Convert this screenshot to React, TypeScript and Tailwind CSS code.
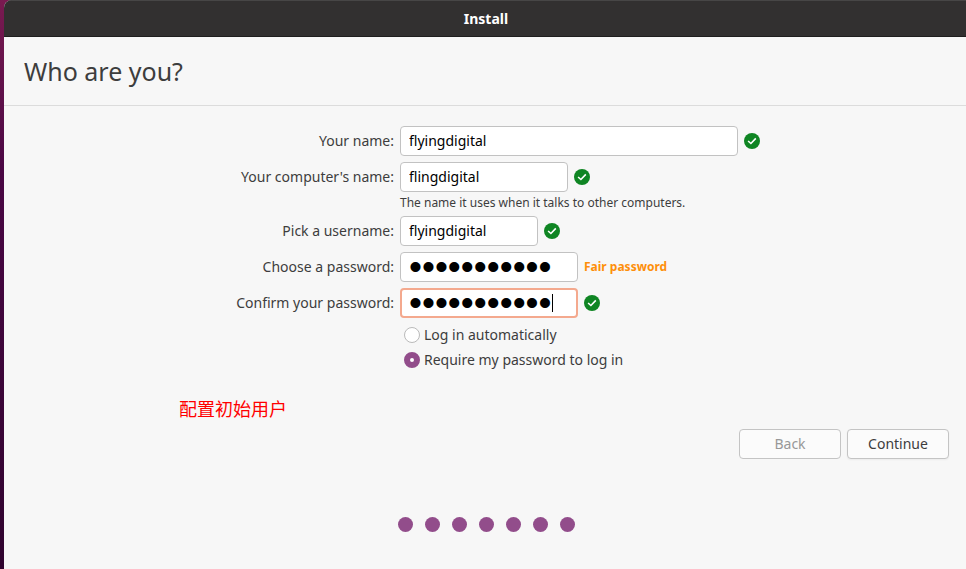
import { ReactNode } from "react";

const entry =
  "h-[30px] rounded border border-[#c2c2c2] bg-white px-2 pb-0.5 text-sm text-black outline-none";
const passwordEntry =
  "h-[30px] w-[178px] rounded bg-white font-['Liberation_Sans',sans-serif] text-[37px] text-black outline-none";
const button = "h-[30px] w-[102px] rounded border border-[#c4c4c4] bg-[#fbfbfb] text-sm";

function Check() {
  return (
    <svg viewBox="0 0 16 16" className="size-4 shrink-0" role="img" aria-label="OK">
      <circle cx="8" cy="8" r="8" fill="#0f8523" />
      <path d="M4.1 8 6.9 10.5 11.8 5.4" fill="none" stroke="#fff" strokeWidth="1.6" />
    </svg>
  );
}

function Row({ id, label, children, hint }: { id: string; label: string; children: ReactNode; hint?: string }) {
  return (
    <div className="grid grid-cols-[390fr_566fr] gap-x-1.5">
      <label htmlFor={id} className="text-right text-sm leading-[30px]">
        {label}
      </label>
      <div>
        <div className="flex items-center gap-1.5">{children}</div>
        {hint && <p className="pt-1 text-xs leading-[14px]">{hint}</p>}
      </div>
    </div>
  );
}

function Choice({ id, label, checked }: { id: string; label: string; checked?: boolean }) {
  return (
    <div className="flex h-[25px] items-center gap-1">
      <input
        id={id}
        type="radio"
        name="login"
        defaultChecked={checked}
        className="size-4 appearance-none rounded-full border border-[#bababa] bg-white checked:border-[6px] checked:border-[#924d8b]"
      />
      <label htmlFor={id} className="text-sm">
        {label}
      </label>
    </div>
  );
}

export default function App() {
  return (
    <div className="min-h-screen bg-linear-to-b from-[#7a1a50] via-[#4a0744] via-30% to-[#30042f] pl-1 font-['Noto_Sans','Noto_Sans_CJK_SC',sans-serif] text-[#3d3d3d]">
      <main className="min-h-screen overflow-hidden rounded-tl-lg bg-[#f7f7f7]">
        <header className="flex h-[37px] items-center justify-center border-t border-b border-t-[#474646] border-b-[#1f1e1e] bg-[#323030] pl-0.5 text-sm font-bold text-white">
          Install
        </header>
        <h1 className="border-b border-[#dcdcdc] px-5 py-4 text-[25px] leading-9">Who are you?</h1>

        <form className="pt-5">
          <div className="flex flex-col gap-1.5">
            <Row id="name" label="Your name:">
              <input id="name" defaultValue="flyingdigital" className={`${entry} w-[338px]`} />
              <Check />
            </Row>
            <Row id="host" label="Your computer's name:" hint="The name it uses when it talks to other computers.">
              <input id="host" defaultValue="flingdigital" className={`${entry} w-[168px]`} />
              <Check />
            </Row>
            <Row id="user" label="Pick a username:">
              <input id="user" defaultValue="flyingdigital" className={`${entry} w-[138px]`} />
              <Check />
            </Row>
            <Row id="password" label="Choose a password:">
              <input
                id="password"
                type="password"
                defaultValue="flyingdigit"
                className={`${passwordEntry} border border-[#c2c2c2] px-2`}
              />
              <span className="text-xs font-bold text-[#fe8f0a]">Fair password</span>
            </Row>
            <Row id="confirm" label="Confirm your password:">
              <div className="relative flex">
                <input
                  id="confirm"
                  type="password"
                  defaultValue="flyingdigit"
                  className={`${passwordEntry} border-2 border-[#f4a98e] px-[7px]`}
                />
                <span className="absolute top-1.5 left-[152px] h-[18px] w-px bg-black" />
              </div>
              <Check />
            </Row>
          </div>
          <div className="grid grid-cols-[390fr_566fr] gap-x-1.5 pt-1">
            <div className="col-start-2 pl-1">
              <Choice id="auto" label="Log in automatically" />
              <Choice id="require" label="Require my password to log in" checked />
            </div>
          </div>
        </form>

        <p className="pt-6 pl-[175px] font-['Noto_Sans_CJK_SC',sans-serif] text-lg leading-6 text-[#ff0000]">
          配置初始用户
        </p>

        <div className="flex justify-end gap-1.5 pt-[9px] pr-[17px]">
          <button type="button" disabled className={`${button} text-[#989898]`}>
            Back
          </button>
          <button type="button" className={`${button} shadow-xs`}>
            Continue
          </button>
        </div>

        <div className="flex justify-center gap-3 pt-[58px] pb-9 pl-0.5">
          {[1, 2, 3, 4, 5, 6, 7].map((step) => (
            <span key={step} className="size-[15px] rounded-full bg-[#924d8b]" />
          ))}
        </div>
      </main>
    </div>
  );
}
